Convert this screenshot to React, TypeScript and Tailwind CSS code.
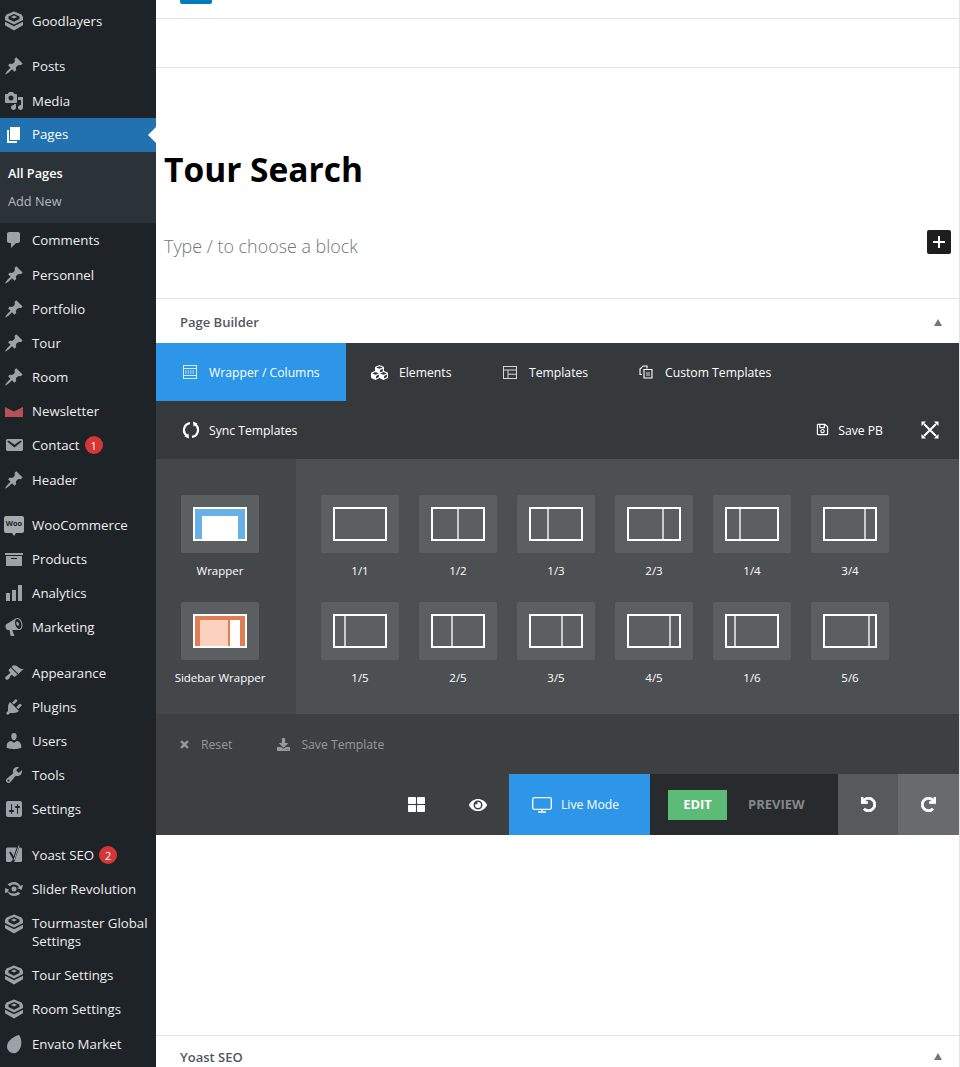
import React from "react";
import { FaCubes, FaRegSave, FaTimes, FaDownload, FaThLarge, FaEye, FaUndo, FaRedo } from "react-icons/fa";

const P: Record<string, string> = {
  pin: "M10.44 3.02l1.82-1.82 6.36 6.35-1.83 1.82c-1.05-.68-2.48-.57-3.41.36l-.75.75c-.92.93-1.04 2.35-.35 3.41l-1.83 1.82-2.41-2.41-2.8 2.79c-.42.42-3.38 2.71-3.8 2.29s1.86-3.39 2.28-3.81l2.79-2.79L4.1 9.36l1.83-1.82c1.05.69 2.48.57 3.4-.36l.75-.75c.93-.92 1.05-2.35.36-3.41z",
  media: "M13 11V4c0-.55-.45-1-1-1h-1.67L9 1H5L3.67 3H2c-.55 0-1 .45-1 1v7c0 .55.45 1 1 1h10c.55 0 1-.45 1-1zM7 4.5c1.38 0 2.5 1.12 2.5 2.5S8.38 9.5 7 9.5 4.5 8.38 4.5 7 5.62 4.5 7 4.5zM14 6h5v10.5c0 1.38-1.12 2.5-2.5 2.5S14 17.88 14 16.5s1.12-2.5 2.5-2.5c.17 0 .34.02.5.05V9h-3V6zm-4 8.05V13h2v3.5c0 1.38-1.12 2.5-2.5 2.5S7 17.88 7 16.5 8.12 14 9.5 14c.17 0 .34.02.5.05z",
  page: "M6 15V2h10v13H6zm-1 1h8v2H3V5h2v11z",
  comments: "M5 2h9c1.1 0 2 .9 2 2v7c0 1.1-.9 2-2 2h-2l-5 5v-5H5c-1.1 0-2-.9-2-2V4c0-1.1.9-2 2-2z",
  news: "M1 6l9 4.5L19 6V16H1z",
  email: "M3.87 4h13.25C18.37 4 19 4.59 19 5.79v8.42c0 1.19-.63 1.79-1.88 1.79H3.87c-1.25 0-1.88-.6-1.88-1.79V5.79c0-1.2.63-1.79 1.88-1.79zm6.62 8.6l6.74-5.53c.24-.2.43-.66.13-1.07-.29-.41-.82-.42-1.17-.17l-5.7 3.86L4.8 5.83c-.35-.25-.88-.24-1.17.17-.3.41-.11.87.13 1.07z",
  archive: "M19 4v2H1V4h18zM2 7h16v10H2V7zm11 3V9H7v1h6z",
  chart: "M18 18V2h-4v16h4zm-6 0V7H8v11h4zm-6 0v-8H2v8h4z",
  mega: "M18.15 5.94c.46 1.62.38 3.22-.02 4.48-.42 1.28-1.26 2.18-2.3 2.48-.2.06-.5.1-.8.1H8.2l2.2 5.5c.02.14-.4.5-.6.5H7c-.1 0-.5-.3-.5-.5l-1-5.5H4.25c-.5.06-1.08-.18-1.54-.62s-.88-1.08-1.06-1.88c-.24-.8-.2-1.56-.02-2.2.18-.62.58-1.08 1.06-1.3l9-5.4c.3-.2.6-.35 1-.46 1.04-.3 2.24.1 3.22.98s1.84 2.24 2.26 3.86zm-2.6 5.98c.4-.1.74-.34 1.04-.7.58-.7.86-1.76.86-3.04 0-.64-.1-1.3-.28-1.98-.34-1.36-1.02-2.5-1.78-3.24s-1.68-1.1-2.46-.88c-.82.22-1.4.96-1.7 2-.32 1.04-.28 2.36.06 3.72.38 1.36 1 2.5 1.8 3.24.78.74 1.62 1.1 2.46.88zM13 4.84c1.2-.2 2.06 1.6 2.06 2.82 0 .92-.3 1.2-.9 1.2-1.3 0-1.88-1.5-1.88-2.74 0-.6.2-1.18.72-1.28z",
  brush: "M14.48 11.06L7.41 3.99l1.5-1.5c.5-.56 2.3-.47 3.51.32 1.21.8 1.43 1.28 2.91 2.1 1.18.64 2.45 1.26 4.45.85zm-.71.71L6.7 4.7 4.93 6.47c-.39.39-.39 1.02 0 1.41l1.06 1.06c.39.39.39 1.03 0 1.42-.6.6-1.43 1.11-2.21 1.69-.35.26-.7.53-1.01.84C1.43 13.23.4 14.8 2.1 16.5c.91.91 2.65-.29 3.34-1.57.49-.88.89-1.76 1.7-2.57.4-.4 1.03-.4 1.42 0l1.06 1.06c.39.4 1.02.4 1.41 0z",
  plug: "M13.11 4.36L9.87 7.6 8 5.73l3.24-3.24c.35-.34 1.05-.2 1.56.32.52.51.66 1.21.31 1.55zm-8 1.77l.91-1.12 9.01 9.01-1.19.84c-.71.71-2.63 1.16-3.82 1.16H6.14L4.9 17.26c-.59.59-1.54.59-2.12 0-.59-.58-.59-1.53 0-2.12l1.24-1.24v-3.88c0-1.13.4-3.19 1.09-3.89zm7.26 3.97l3.24-3.24c.34-.35 1.04-.21 1.55.31.52.51.66 1.21.31 1.55l-3.24 3.25z",
  users: "M10 9.25c-2.27 0-2.73-3.44-2.73-3.44C7 4.02 7.82 2 9.97 2c2.16 0 2.98 2.02 2.71 3.81 0 0-.41 3.44-2.68 3.44zm0 2.57L12.72 10c2.39 0 4.52 2.33 4.52 4.53v2.49s-3.65 1.13-7.24 1.13c-3.65 0-7.24-1.13-7.24-1.13v-2.49c0-2.25 1.94-4.48 4.47-4.48z",
  tools: "M16.68 9.77c-1.34 1.34-3.3 1.67-4.95.99l-5.41 6.52c-.99.99-2.59.99-3.58 0s-.99-2.59 0-3.57l6.52-5.42c-.68-1.65-.35-3.61.99-4.95 1.28-1.28 3.12-1.62 4.72-1.06l-2.89 2.89 2.82 2.82 2.86-2.87c.53 1.58.18 3.39-1.08 4.65zM3.81 16.21c.4.39 1.04.39 1.43 0 .4-.4.4-1.04 0-1.43-.39-.4-1.03-.4-1.43 0-.39.39-.39 1.03 0 1.43z",
  settings: "M18 16V4c0-1.1-.9-2-2-2H4c-1.1 0-2 .9-2 2v12c0 1.1.9 2 2 2h12c1.1 0 2-.9 2-2zM8 11h1c.55 0 1 .45 1 1s-.45 1-1 1H8v1.5c0 .28-.22.5-.5.5s-.5-.22-.5-.5V13H6c-.55 0-1-.45-1-1s.45-1 1-1h1V5.5c0-.28.22-.5.5-.5s.5.22.5.5V11zm5-2h-1c-.55 0-1-.45-1-1s.45-1 1-1h1V5.5c0-.28.22-.5.5-.5s.5.22.5.5V7h1c.55 0 1 .45 1 1s-.45 1-1 1h-1v5.5c0 .28-.22.5-.5.5s-.5-.22-.5-.5V9z",
  stack: "M10 .5L2.500 3.500 1 6v3l9 4.500L19 9V6l-1.500-2.500zM10 3L15.500 5.500V8L10 10.800 4.500 8V5.500zM10 4.600L7 6l3 1.500L13 6zM1 10.800l9 4.500 9-4.500v3.400L10 19.500 1 14.200z",
  slider: "M10 3c2.700 0 5 1.500 6.200 3.700L19 6l-1.400 5-4.600-2 2-.8C14 6.600 12.100 5.500 10 5.500c-1.600 0-3 .6-4 1.700L3.600 5.500C5.200 4 7.500 3 10 3zM1 9l4.600 2-2 .8C4.600 13.400 6.400 14.500 10 14.500c1.600 0 3-.6 4-1.700l2.400 1.700C14.800 16 12.500 17 10 17c-2.700 0-5-1.500-6.200-3.700L1 14zM10 7.500a2.500 2.500 0 1 1 0 5 2.500 2.500 0 0 1 0-5z",
  envato: "M15 .8C17 4 18 8 17 12 16 16 13 19.200 10 19.200 6 19.200 3 16 3 12.500 3 8 8 3 15 .8z",
};

function Dash({ d, color = "#9ca2a7" }: { d: string; color?: string }) {
  return (
    <svg viewBox="0 0 20 20" width="20" height="20" fill={color} className="shrink-0">
      <path d={d} fillRule="evenodd" />
    </svg>
  );
}

function Yoast() {
  return (
    <svg viewBox="0 0 20 20" width="20" height="20" className="shrink-0">
      <rect x="2" y="2.500" width="16" height="14.500" rx="1.500" fill="#9ca2a7" />
      <path d="M6 7L9.800 13.500" stroke="#1e2328" strokeWidth="2" fill="none" />
      <path d="M14.500 .8L9.500 15.500Q9 17.500 7 18" stroke="#1e2328" strokeWidth="2.400" fill="none" />
      <path d="M15 .5L10 15" stroke="#c4c7ca" strokeWidth="0.800" fill="none" />
    </svg>
  );
}

function Woo() {
  return (
    <span className="relative mb-[2px] flex h-[17px] w-[20px] shrink-0 items-center justify-center rounded-[2px] bg-[#a7aaad] text-[7.5px] font-bold leading-none text-[#1e2328]">
      Woo
      <span className="absolute -bottom-[3px] left-[8px] h-0 w-0 border-x-[2px] border-t-[3px] border-x-transparent border-t-[#a7aaad]" />
    </span>
  );
}

type Item = { icon: string; label: React.ReactNode; m?: string; badge?: string; color?: string };

function Row({ icon, label, m = "", badge, color }: Item) {
  return (
    <div className={`flex min-h-[34px] items-center text-[13.25px] leading-[18px] text-[#eeeeee] ${m}`}>
      <span className="ml-[4px] mr-[8px] flex w-[20px] shrink-0 justify-center">
        {icon === "woo" ? <Woo /> : icon === "yoast" ? <Yoast /> : <Dash d={P[icon]} color={color} />}
      </span>
      <span>{label}</span>
      {badge && (
        <span className="ml-[5px] flex h-[18px] w-[18px] items-center justify-center rounded-full bg-[#d63638] text-[11px] leading-none text-white">
          {badge}
        </span>
      )}
    </div>
  );
}

function Sidebar() {
  return (
    <aside className="h-[1067px] w-[156px] shrink-0 overflow-hidden bg-[#1e2328] pt-[4px]">
      <Row icon="stack" label="Goodlayers" />
      <Row icon="pin" label="Posts" m="mt-[11px]" />
      <Row icon="media" label="Media" m="mt-[1px]" />
      <div className="relative flex h-[34px] items-center bg-[#2271b1] text-[13.25px] text-white">
        <span className="ml-[4px] mr-[8px] flex w-[20px] justify-center">
          <Dash d={P.page} color="#ffffff" />
        </span>
        Pages
        <span className="absolute right-0 top-[9px] h-0 w-0 border-y-[8px] border-r-[8px] border-y-transparent border-r-white" />
      </div>
      <div className="flex h-[71px] flex-col bg-[#2c3338] pl-[8px] pt-[11px] text-[12.75px] leading-[20px]">
        <span className="font-semibold text-white">All Pages</span>
        <span className="mt-[8px] text-[#b4b9be]">Add New</span>
      </div>
      <Row icon="comments" label="Comments" />
      <Row icon="pin" label="Personnel" m="mt-[1px]" />
      <Row icon="pin" label="Portfolio" />
      <Row icon="pin" label="Tour" />
      <Row icon="pin" label="Room" />
      <Row icon="news" label="Newsletter" color="#b5505a" />
      <Row icon="email" label="Contact" badge="1" />
      <Row icon="pin" label="Header" m="mt-[1px]" />
      <Row icon="woo" label="WooCommerce" m="mt-[11px]" />
      <Row icon="archive" label="Products" />
      <Row icon="chart" label="Analytics" />
      <Row icon="mega" label="Marketing" />
      <Row icon="brush" label="Appearance" m="mt-[12px]" />
      <Row icon="plug" label="Plugins" />
      <Row icon="users" label="Users" />
      <Row icon="tools" label="Tools" />
      <Row icon="settings" label="Settings" />
      <Row icon="yoast" label="Yoast SEO" m="mt-[12px]" badge="2" />
      <Row icon="slider" label="Slider Revolution" />
      <div className="flex h-[52px] items-start pt-[8px] text-[13.25px] leading-[18px] text-[#eeeeee]">
        <span className="ml-[4px] mr-[8px] flex w-[20px] shrink-0 justify-center">
          <Dash d={P.stack} />
        </span>
        <span>Tourmaster Global Settings</span>
      </div>
      <Row icon="stack" label="Tour Settings" />
      <Row icon="stack" label="Room Settings" />
      <Row icon="envato" label="Envato Market" m="mt-[1px]" />
    </aside>
  );
}

function ColIcon({ at }: { at?: number }) {
  return (
    <svg viewBox="0 0 54 34" width="54" height="34">
      <rect x="1" y="1" width="52" height="32" fill="none" stroke="#ffffff" strokeWidth="2" />
      {at !== undefined && <rect x={at} y="2" width="2" height="30" fill="#c9cbcc" />}
    </svg>
  );
}

function WrapperIcon() {
  return (
    <svg viewBox="0 0 54 34" width="54" height="34">
      <rect width="54" height="34" fill="#ffffff" />
      <rect x="2" y="2" width="50" height="30" fill="#68b0e8" />
      <rect x="9" y="9" width="36" height="25" fill="#ffffff" />
    </svg>
  );
}

function SidebarIcon() {
  return (
    <svg viewBox="0 0 54 34" width="54" height="34">
      <rect width="54" height="34" fill="#ffffff" />
      <rect x="2" y="2" width="50" height="30" fill="#e17d53" />
      <rect x="7" y="6" width="28" height="26" fill="#fbd2c0" />
      <rect x="37" y="6" width="10" height="26" fill="#ffffff" />
    </svg>
  );
}

function Tile({ label, children }: { label: string; children: React.ReactNode }) {
  return (
    <div className="flex w-[78px] flex-col items-center">
      <div className="flex h-[58px] w-[78px] items-center justify-center rounded-[2px] bg-[#5c5f61]">{children}</div>
      <div className="mt-[9px] whitespace-nowrap text-center text-[11.5px] leading-[18px] text-white">{label}</div>
    </div>
  );
}

const COLS: [string, number | undefined][] = [
  ["1/1", undefined], ["1/2", 26], ["1/3", 18], ["2/3", 35], ["1/4", 14], ["3/4", 41],
  ["1/5", 11], ["2/5", 20], ["3/5", 32], ["4/5", 42], ["1/6", 9], ["5/6", 45],
];

function Txt({ className = "", children }: { className?: string; children: React.ReactNode }) {
  return <span className={`mt-[2px] ${className}`}>{children}</span>;
}

function WrapTabIcon() {
  return (
    <svg viewBox="0 0 14 14" width="14" height="14" fill="none" stroke="#ffffff" strokeWidth="1" className="shrink-0 opacity-80">
      <rect x="0.5" y="0.5" width="13" height="13" />
      <path d="M0.500 3.500H13.500M0.500 10.500H13.500" />
      <path d="M2 6H12M2 8H12" strokeDasharray="1.500 1" />
    </svg>
  );
}

function TemplatesIcon() {
  return (
    <svg viewBox="0 0 14 13" width="14" height="13" fill="none" stroke="#ffffff" strokeWidth="1" className="shrink-0 opacity-80">
      <rect x="0.500" y="0.500" width="13" height="12" />
      <path d="M0.500 4H13.500M5 4V12.500M5 8.200H13.500" />
    </svg>
  );
}

function CustomIcon() {
  return (
    <svg viewBox="0 0 14 14" width="14" height="14" fill="none" stroke="#ffffff" strokeWidth="1.100" className="shrink-0">
      <path d="M3 9.500H1V4L4 1H8V3.500" />
      <path d="M5 4.500H13V13H5z" />
      <path d="M7 8h4M7 10h4" strokeWidth="0.800" />
    </svg>
  );
}

function SyncIcon() {
  return (
    <svg viewBox="0 0 18 18" width="18" height="18" className="shrink-0">
      <path d="M8 2.100A7 7 0 0 0 5.200 14.900" fill="none" stroke="#ffffff" strokeWidth="2.200" />
      <path d="M10 15.900A7 7 0 0 0 12.800 3.100" fill="none" stroke="#ffffff" strokeWidth="2.200" />
      <path d="M11 .5L15.500 2.500 11.500 5.500z" fill="#ffffff" />
      <path d="M7 17.500L2.500 15.500 6.500 12.500z" fill="#ffffff" />
    </svg>
  );
}

function ExpandIcon() {
  return (
    <svg viewBox="0 0 18 18" width="18" height="18" fill="#ffffff" className="shrink-0">
      <path d="M3 3L15 15M15 3L3 15" stroke="#ffffff" strokeWidth="2" fill="none" />
      <path d="M0.500 0.500H5L0.500 5zM17.500 0.500H13L17.500 5zM0.500 17.500H5L0.500 13zM17.500 17.500H13L17.500 13z" />
    </svg>
  );
}

function MonitorIcon() {
  return (
    <svg viewBox="0 0 20 16" width="20" height="16" fill="none" stroke="#ffffff" strokeWidth="1.300" className="shrink-0">
      <rect x="0.700" y="0.700" width="18.600" height="11.600" rx="1.500" />
      <path d="M6 15H14M10 12.300V15" />
    </svg>
  );
}

function Panel() {
  return (
    <section className="h-[492px] bg-[#36393c] text-[12.2px] text-white">
      <div className="flex h-[58px] items-stretch">
        <div className="flex w-[190px] items-center bg-[#2d96e8] pl-[27px]">
          <WrapTabIcon />
          <Txt className="ml-[12px]">Wrapper / Columns</Txt>
        </div>
        <div className="flex w-[131px] items-center pl-[25px]">
          <FaCubes className="shrink-0 text-[17px]" />
          <Txt className="ml-[11px]">Elements</Txt>
        </div>
        <div className="flex w-[136px] items-center pl-[26px]">
          <TemplatesIcon />
          <Txt className="ml-[12px]">Templates</Txt>
        </div>
        <div className="flex items-center pl-[26px]">
          <CustomIcon />
          <Txt className="ml-[12px]">Custom Templates</Txt>
        </div>
      </div>
      <div className="flex h-[58px] items-center justify-between pl-[26px] pr-[20px]">
        <div className="flex items-center">
          <SyncIcon />
          <Txt className="ml-[9px]">Sync Templates</Txt>
        </div>
        <div className="flex items-center">
          <FaRegSave className="text-[13px]" />
          <Txt className="ml-[9px] mr-[38px]">Save PB</Txt>
          <ExpandIcon />
        </div>
      </div>
      <div className="flex h-[255px]">
        <div className="flex w-[140px] shrink-0 flex-col items-start gap-[22px] bg-[#43474a] pl-[25px] pt-[36px]">
          <Tile label="Wrapper"><WrapperIcon /></Tile>
          <Tile label="Sidebar Wrapper"><SidebarIcon /></Tile>
        </div>
        <div className="grid flex-1 grid-cols-[repeat(6,78px)] content-start gap-x-[20px] gap-y-[22px] bg-[#4c5053] pl-[25px] pt-[36px]">
          {COLS.map(([label, at]) => (
            <Tile key={label} label={label}><ColIcon at={at} /></Tile>
          ))}
        </div>
      </div>
      <div className="flex h-[60px] items-center bg-[#3e3f41] pl-[23px] text-[#97999b]">
        <FaTimes className="stroke-current stroke-[30] text-[11px]" />
        <Txt className="ml-[11px]">Reset</Txt>
        <FaDownload className="ml-[45px] text-[13px]" />
        <Txt className="ml-[11px]">Save Template</Txt>
      </div>
      <div className="flex h-[61px] items-stretch bg-[#3e3f41]">
        <div className="flex w-[353px] shrink-0 items-center justify-end">
          <FaThLarge className="mr-[44px] text-[17px]" />
          <FaEye className="mr-[22px] text-[18px]" />
        </div>
        <div className="flex w-[141px] shrink-0 items-center bg-[#2d96e8] pl-[23px]">
          <MonitorIcon />
          <Txt className="ml-[9px]">Live Mode</Txt>
        </div>
        <div className="flex w-[188px] shrink-0 items-center bg-[#272b2e] pl-[18px] text-[13px] font-bold">
          <span className="flex h-[30px] w-[59px] items-center justify-center bg-[#5cbb77]">EDIT</span>
          <span className="ml-[21px] text-[#85888a]">PREVIEW</span>
        </div>
        <div className="flex w-[60px] shrink-0 items-center justify-center bg-[#57595b]">
          <FaUndo className="stroke-current stroke-[30] text-[15px]" />
        </div>
        <div className="flex w-[61px] shrink-0 items-center justify-center bg-[#686b6d]">
          <FaRedo className="stroke-current stroke-[30] text-[15px]" />
        </div>
      </div>
    </section>
  );
}

function Tri() {
  return <span className="mb-[2px] mr-[17px] h-0 w-0 border-x-[4.5px] border-b-[7px] border-x-transparent border-b-[#72777c]" />;
}

export default function App() {
  return (
    <div className="flex h-[1067px] w-[960px] overflow-hidden bg-white font-['Open_Sans','Noto_Sans',sans-serif]">
      <Sidebar />
      <main className="w-[804px] border-r border-[#e2e4e7]">
        <div className="h-[19px] border-b border-[#e2e4e7] pl-[24px]">
          <div className="h-[4px] w-[32px] rounded-b-[2px] bg-[#007cba]" />
        </div>
        <div className="h-[49px] border-b border-[#e2e4e7]" />
        <div className="h-[231px] border-b border-[#e2e4e7] px-[8px]">
          <h1 className="pt-[77px] text-[33.5px] font-bold leading-[48px] text-black">Tour Search</h1>
          <div className="mt-[37px] flex items-start justify-between">
            <span className="mt-[3px] text-[17.9px] font-light leading-[26px] text-[#757575]">Type / to choose a block</span>
            <span className="flex h-[24px] w-[24px] items-center justify-center rounded-[2px] bg-[#1e1e1e]">
              <svg viewBox="0 0 14 14" width="14" height="14" stroke="#ffffff" strokeWidth="2">
                <path d="M7 1V13M1 7H13" />
              </svg>
            </span>
          </div>
        </div>
        <div className="flex h-[44px] items-center justify-between pl-[24px] pt-[4px]">
          <span className="text-[13px] font-semibold text-[#50575e]">Page Builder</span>
          <Tri />
        </div>
        <Panel />
        <div className="h-[200px]" />
        <div className="flex h-[44px] items-center justify-between border-t border-[#e2e4e7] pl-[24px]">
          <span className="text-[13px] font-semibold text-[#50575e]">Yoast SEO</span>
          <Tri />
        </div>
      </main>
    </div>
  );
}
